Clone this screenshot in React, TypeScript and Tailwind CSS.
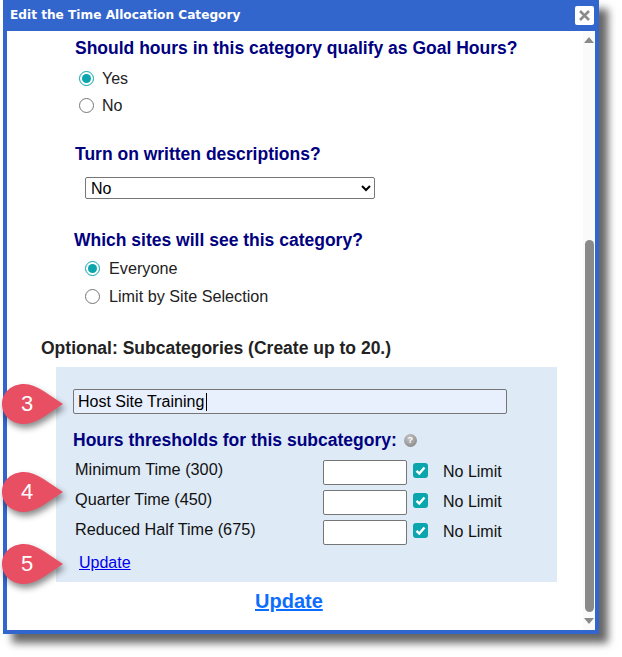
const arial = "font-['Liberation_Sans',Arial,sans-serif]";

function Heading({ children, className }: { children: React.ReactNode; className: string }) {
    return <div className={`text-[17.5px] leading-[18px] font-bold text-[#000080] ${className}`}>{children}</div>;
}

function Radio({ label, checked, name, className }: { label: string; checked?: boolean; name: string; className: string }) {
    return (
        <label className={`flex items-center ${className}`}>
            <input type="radio" name={name} defaultChecked={checked} className="w-[15px] h-[15px] m-0 accent-[#0aa5ad]" />
            <span className="text-[#222]">{label}</span>
        </label>
    );
}

function ThresholdRow({ label }: { label: string }) {
    return (
        <div className="flex items-center h-[30px]">
            <div className="w-[250px] pl-[2px] pb-[6px] text-[16.25px] text-[#111]">{label}</div>
            <input type="text" className="w-[84px] h-[25px] bg-white border border-[#767676] rounded-[2px]" />
            <div className="ml-[6px] mb-[3px] w-[15px] h-[15px] rounded-[3px] bg-[#0aa5ad] flex items-center justify-center">
                <svg width="11" height="11" viewBox="0 0 11 11">
                    <path d="M1.5 5.8L4.3 8.5L9.5 2.5" fill="none" stroke="white" strokeWidth="2.4" />
                </svg>
            </div>
            <span className="ml-[15px] text-base text-[#111]">No Limit</span>
        </div>
    );
}

function Callout({ n, top }: { n: number; top: string }) {
    return (
        <div className={`absolute left-[1px] ${top} w-[66px] h-[46px]`}>
            <svg width="66" height="46" viewBox="0 0 66 46" className="drop-shadow-[2px_4px_3px_rgba(0,0,0,0.45)]">
                <path d="M23 0C36 0 49 12 62 20C49 28 36 40 23 40C10 40 1 31 1 20C1 9 10 0 23 0Z" fill="#e84f63" />
            </svg>
            <span className="absolute left-[14px] top-[7px] w-[24px] text-center text-[22px] leading-[26px] text-white">{n}</span>
        </div>
    );
}

export default function App() {
    return (
        <div className={`relative w-[622px] h-[657px] bg-white ${arial}`}>
            <div className="ml-[3px] w-[596px] h-[634px] flex flex-col bg-[#3366cc] shadow-[9px_9px_8px_rgba(0,0,0,0.6)]">
                <div className="h-[31px] flex items-center justify-between pl-[7px] pr-[5px]">
                    <div className="font-['DejaVu_Sans',Verdana,sans-serif] text-[12.15px] font-bold text-white">Edit the Time Allocation Category</div>
                    <div className="w-[19px] h-[19px] bg-white rounded-[2px] flex items-center justify-center">
                        <svg width="13" height="13" viewBox="0 0 13 13">
                            <path d="M2 2L11 11M11 2L2 11" stroke="#8c8c8c" strokeWidth="2.6" />
                        </svg>
                    </div>
                </div>
                <div className="flex-1 flex mx-[4px] mb-[4px] bg-white overflow-hidden">
                    <div className="flex-1 flex flex-col">
                        <Heading className="mt-[8px] ml-[68px]">Should hours in this category qualify as Goal Hours?</Heading>
                        <Radio name="goal" label="Yes" checked className="h-[27px] gap-[8px] text-base mt-[8px] ml-[72px]" />
                        <Radio name="goal" label="No" className="h-[27px] gap-[8px] text-base ml-[72px]" />
                        <Heading className="mt-[26px] ml-[68px]">Turn on written descriptions?</Heading>
                        <select className="mt-[14px] ml-[78px] w-[290px] h-[22px] bg-white border border-[#767676] rounded-[2px] text-base leading-none pl-[1px] appearance-auto">
                            <option>No</option>
                        </select>
                        <Heading className="mt-[32px] ml-[67px]">Which sites will see this category?</Heading>
                        <Radio name="sites" label="Everyone" checked className="h-7 gap-[9px] text-[16.2px] mt-[5px] ml-[78px]" />
                        <Radio name="sites" label="Limit by Site Selection" className="h-7 gap-[9px] text-[16.2px] ml-[78px]" />
                        <div className="mt-[29px] ml-[34px] text-[17.5px] leading-[18px] font-bold text-[#222]">Optional: Subcategories (Create up to 20.)</div>
                        <div className="mt-[10px] ml-[49px] w-[501px] h-[215px] bg-[#deeaf6] pl-[17px] pt-[22px]">
                            <div className="relative w-[434px]">
                                <input type="text" defaultValue="Host Site Training" className="block w-full h-[25px] bg-[#e8f0fe] border border-[#767676] rounded-[2px] px-[4px] text-base text-black" />
                                <span className="absolute left-[133px] top-[4px] w-px h-[18px] bg-black" />
                            </div>
                            <Heading className="mt-[17px] flex items-center">
                                Hours thresholds for this subcategory:
                                <span className="ml-[7px] w-[13px] h-[13px] rounded-full bg-[radial-gradient(circle_at_40%_30%,#c4c4c4,#7d7d7d)] text-white text-[9px] leading-[13px] text-center">?</span>
                            </Heading>
                            <div className="mt-[8px] flex flex-col">
                                <ThresholdRow label="Minimum Time (300)" />
                                <ThresholdRow label="Quarter Time (450)" />
                                <ThresholdRow label="Reduced Half Time (675)" />
                            </div>
                            <a href="#" className="block mt-[7px] ml-[6px] text-base leading-[18px] text-[#0000ee] underline">Update</a>
                        </div>
                        <a href="#" className="mt-[7px] ml-[248px] text-[20px] leading-[24px] font-bold text-[#0d6efd] underline">Update</a>
                    </div>
                    <div className="w-[12px] flex flex-col items-center bg-[#fafafa]">
                        <svg width="10" height="6" viewBox="0 0 10 6" className="mt-[6px]"><path d="M5 0L10 6H0Z" fill="#8a8a8a" /></svg>
                        <div className="mt-[197px] w-[9px] h-[372px] rounded-full bg-[#8a8a8a]" />
                        <svg width="10" height="6" viewBox="0 0 10 6" className="mt-[6px]"><path d="M0 0H10L5 6Z" fill="#8a8a8a" /></svg>
                    </div>
                </div>
            </div>
            <Callout n={3} top="top-[384px]" />
            <Callout n={4} top="top-[472px]" />
            <Callout n={5} top="top-[544px]" />
        </div>
    );
}
